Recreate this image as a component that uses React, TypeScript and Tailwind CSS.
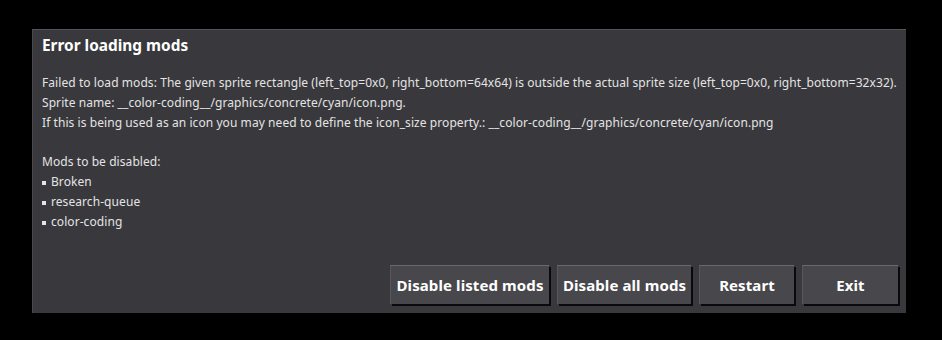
const mods = ['Broken', 'research-queue', 'color-coding'];

function GameButton({ label, width }: { label: string; width: string }) {
  return (
    <button
      className={`${width} h-[39px] flex items-center justify-center bg-[#48474b] border-t border-l border-t-[#6a696d] border-l-[#58575b] shadow-[2px_2px_0_#0a0a0a] text-white font-bold text-[15px] leading-none tracking-[0.1px]`}
    >
      {label}
    </button>
  );
}

export default function App() {
  return (
    <div
      className="w-[942px] h-[340px] bg-black pt-[29px] pl-[32px]"
      style={{ fontFamily: '"Noto Sans", "Liberation Sans", sans-serif' }}
    >
      <div className="w-[874px] h-[284px] bg-[#39383c] border-t border-l border-t-[#55545a] border-l-[#4a494e] flex flex-col">
        <h1 className="pl-[9px] pt-[5px] text-white font-bold text-[15.4px] leading-[22px]">
          Error loading mods
        </h1>
        <div className="pl-[9px] pt-[16px] text-[#e4e4e4] text-[12px] leading-[20px] tracking-[0.07px]">
          <p>
            Failed to load mods: The given sprite rectangle (left_top=0x0, right_bottom=64x64) is outside the actual sprite size (left_top=0x0, right_bottom=32x32).
          </p>
          <p>Sprite name: __color-coding__/graphics/concrete/cyan/icon.png.</p>
          <p>
            If this is being used as an icon you may need to define the icon_size property.: __color-coding__/graphics/concrete/cyan/icon.png
          </p>
          <p className="mt-[19px]">Mods to be disabled:</p>
          <ul>
            {mods.map((m) => (
              <li key={m} className="flex items-center">
                <span className="w-[4px] h-[4px] bg-[#e4e4e4] mr-[5px] mt-[1px]" />
                {m}
              </li>
            ))}
          </ul>
        </div>
        <div className="mt-auto flex justify-end gap-[8px] pr-[8px] pb-[9px]">
          <GameButton label="Disable listed mods" width="w-[159px]" />
          <GameButton label="Disable all mods" width="w-[134px]" />
          <GameButton label="Restart" width="w-[95px]" />
          <GameButton label="Exit" width="w-[96px]" />
        </div>
      </div>
    </div>
  );
}
